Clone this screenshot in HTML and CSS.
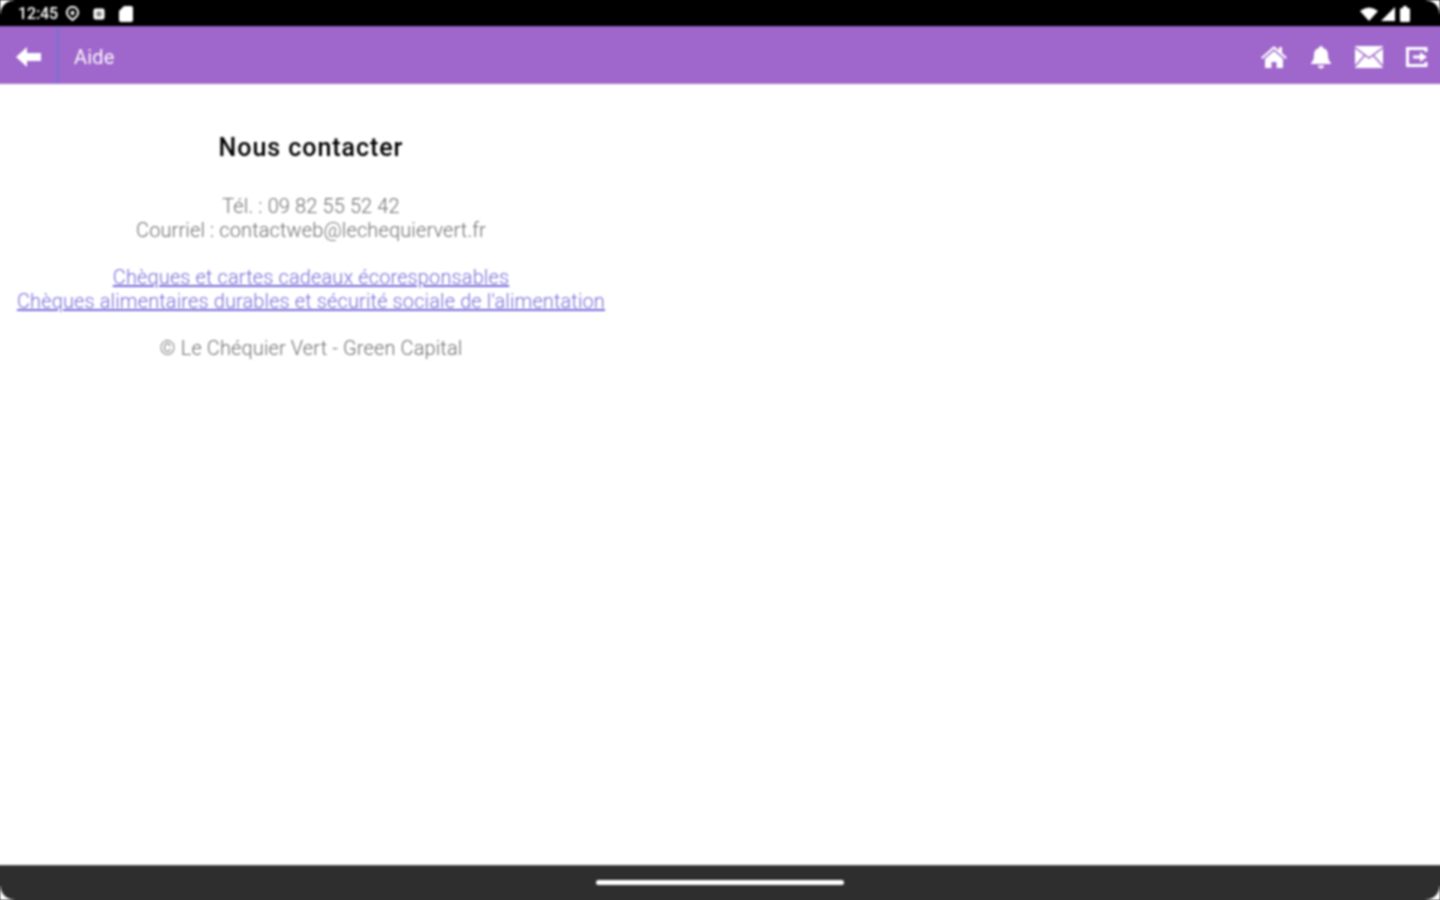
FILE: index.html
```html
<!DOCTYPE html>
<html lang="fr">
<head>
<meta charset="utf-8">
<title>Aide</title>
<link rel="stylesheet" href="styles.css">
</head>
<body>
<div class="screen">
  <header class="status">
    <div class="status-left">
      <span class="time">12:45</span>
      <svg class="ic-vpn" viewBox="0 0 16 18" width="15" height="17"><path d="M8 2a6 6 0 0 0-4 10.400L8 16l4-3.600A6 6 0 0 0 8 2z" fill="none" stroke="#fff" stroke-width="2"/><path d="M8 5.500l-2.500 3L8 11l2.500-2.500z" fill="#fff"/></svg>
      <svg class="ic-sq" viewBox="0 0 12 12" width="12" height="12"><rect x="0.500" y="0.500" width="11" height="11" rx="2" fill="#fff"/><rect x="3.500" y="3.500" width="5" height="5" fill="#888"/></svg>
      <svg class="ic-sd" viewBox="0 0 14 16" width="14" height="16"><path d="M5 0h7a2 2 0 0 1 2 2v12a2 2 0 0 1-2 2H2a2 2 0 0 1-2-2V5z" fill="#fff"/></svg>
    </div>
    <div class="status-right">
      <svg viewBox="0 0 18 14" width="18" height="14"><path d="M0 4Q9-3 18 4L9 14z" fill="#fff"/></svg>
      <svg viewBox="0 0 14 14" width="14" height="14"><path d="M14 0v14H0z" fill="#fff"/></svg>
      <svg class="ic-bat" viewBox="0 0 10 16" width="10" height="16"><path d="M3 0h4v2h1.500a1.500 1.500 0 0 1 1.500 1.500V14.500A1.500 1.500 0 0 1 8.500 16h-7A1.500 1.500 0 0 1 0 14.500V3.500A1.500 1.500 0 0 1 1.500 2H3z" fill="#fff"/></svg>
    </div>
  </header>
  <nav class="toolbar">
    <div class="back">
      <svg viewBox="0 0 26 22" width="26" height="22"><path d="M0 11 11 1v6h14v8H11v6z" fill="#fff"/></svg>
    </div>
    <div class="title">Aide</div>
    <div class="actions">
      <svg viewBox="0 0 26 24" width="26" height="24"><path d="M13 1 0 12.500l1.500 1.500L13 4l11.500 10 1.500-1.500-5-4.500V2h-3v3.200z" fill="#fff"/><path d="M13 6 4 13.800V23h6.500v-6h5v6H22v-9.200z" fill="#fff"/></svg>
      <svg viewBox="0 0 22 24" width="22" height="24"><path d="M11 1a2 2 0 0 1 2 2c3.500.8 5 3.500 5 7 0 4 1 6 3 8v1H1v-1c2-2 3-4 3-8 0-3.500 1.500-6.200 5-7a2 2 0 0 1 2-2z" fill="#fff"/><path d="M8 20.500h6a3 3 0 0 1-6 0z" fill="#fff"/></svg>
      <svg viewBox="0 0 28 22" width="28" height="22"><rect width="28" height="22" fill="#fff"/><path d="M0 1.500 14 12 28 1.500M0 20.500 10 9M28 20.500 18 9" fill="none" stroke="#9f66cc" stroke-width="1.500"/></svg>
      <svg viewBox="0 0 22 20" width="22" height="20"><path d="M20 5V1.500H1.500v17H20V15" fill="none" stroke="#fff" stroke-width="3"/><path d="M7 8.500h7V5l7 5-7 5v-3.500H7z" fill="#fff"/></svg>
    </div>
  </nav>
  <main class="content">
    <section class="panel">
      <h1 class="heading">Nous contacter</h1>
      <p class="block">Tél. : 09 82 55 52 42<br>Courriel : contactweb@lechequiervert.fr</p>
      <p class="block"><a href="#">Chèques et cartes cadeaux écoresponsables</a><br><a href="#">Chèques alimentaires durables et sécurité sociale de l'alimentation</a></p>
      <p class="block">© Le Chéquier Vert - Green Capital</p>
    </section>
  </main>
  <footer class="navbar"><span class="handle"></span></footer>
  <span class="corner tl"></span><span class="corner tr"></span><span class="corner bl"></span><span class="corner br"></span>
</div>
</body>
</html>
```
FILE: styles.css
```css
* { box-sizing: border-box; }
html, body { margin: 0; height: 100%; background: #fff; overflow: hidden; }
.screen {
  position: relative; width: 1448px; height: 908px; margin: -4px; display: flex; flex-direction: column;
  font-family: Roboto, "Liberation Sans", sans-serif; overflow: hidden; filter: blur(0.8px);
}
.status { height: 30px; background: #000; display: flex; justify-content: space-between; align-items: center; padding: 5px 34px 0 22px; flex: none; }
.status-left, .status-right { display: flex; align-items: center; }
.time { color: #fff; font-size: 16px; font-weight: 500; letter-spacing: -0.1px; width: 47px; }
.ic-vpn { margin-right: 13px; }
.ic-sq { margin-right: 14px; }
.status-right { gap: 3px; }
.ic-bat { margin-left: 2px; }
.toolbar { height: 58px; flex: none; background: #9f66cc; border-top: 1px solid #8a55b5; display: flex; align-items: center; border-bottom: 1px solid #a874d2; }
.back { width: 63px; height: 100%; border-right: 2px solid #7472d2; display: flex; align-items: center; padding: 3px 0 0 20px; flex: none; }
.title { color: #fff; font-size: 20px; letter-spacing: 0.2px; margin: 4px 0 0 15px; flex: 1; opacity: .95; }
.actions { display: flex; align-items: center; gap: 23px; padding: 3px 16px 0 0; }
.content { flex: 1; background: #fff; }
.panel { width: 630px; text-align: center; padding: 48px 4px 0; color: #6e6e6e; font-size: 20px; font-weight: 300; line-height: 24px; letter-spacing: 0.12px; }
.heading { margin: 0 0 30px; color: #000; font-size: 25px; font-weight: 500; line-height: 32px; letter-spacing: 0.95px; }
.block { margin: 0 0 23px; }
a { color: #7468d8; }
.navbar { height: 39px; flex: none; background: #2e2e2e; border-top: 1px solid #555; display: flex; align-items: center; justify-content: center; padding-bottom: 6px; }
.handle { width: 248px; height: 5px; border-radius: 3px; background: #fff; }
.corner { position: absolute; width: 14px; height: 14px; }
.tl { left: 4px; top: 4px; background: radial-gradient(circle at 100% 100%, transparent 13px, #fff 14px); }
.tr { right: 4px; top: 4px; background: radial-gradient(circle at 0 100%, transparent 13px, #fff 14px); }
.bl { left: 4px; bottom: 4px; background: radial-gradient(circle at 100% 0, transparent 13px, #fff 14px); }
.br { right: 4px; bottom: 4px; background: radial-gradient(circle at 0 0, transparent 13px, #fff 14px); }
```
